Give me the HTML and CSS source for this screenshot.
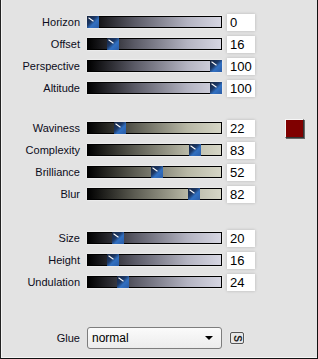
FILE: index.html
```html
<!DOCTYPE html>
<html lang="en">
<head>
    <meta charset="UTF-8">
    <title>Wave Settings</title>
    <link rel="stylesheet" href="styles.css">
</head>
<body>
    <div class="panel">
        <div class="group cool">
            <div class="row"><span class="label">Horizon</span><div class="track"><span class="thumb" style="left: -1px"></span></div><span class="value">0</span></div>
            <div class="row"><span class="label">Offset</span><div class="track"><span class="thumb" style="left: 19px"></span></div><span class="value">16</span></div>
            <div class="row"><span class="label">Perspective</span><div class="track"><span class="thumb" style="left: 122px"></span></div><span class="value">100</span></div>
            <div class="row"><span class="label">Altitude</span><div class="track"><span class="thumb" style="left: 122px"></span></div><span class="value">100</span></div>
        </div>

        <div class="group warm">
            <div class="row"><span class="label">Waviness</span><div class="track"><span class="thumb" style="left: 26px"></span></div><span class="value">22</span><span class="swatch"></span></div>
            <div class="row"><span class="label">Complexity</span><div class="track"><span class="thumb" style="left: 101px"></span></div><span class="value">83</span></div>
            <div class="row"><span class="label">Brilliance</span><div class="track"><span class="thumb" style="left: 63px"></span></div><span class="value">52</span></div>
            <div class="row"><span class="label">Blur</span><div class="track"><span class="thumb" style="left: 100px"></span></div><span class="value">82</span></div>
        </div>

        <div class="group cool">
            <div class="row"><span class="label">Size</span><div class="track"><span class="thumb" style="left: 24px"></span></div><span class="value">20</span></div>
            <div class="row"><span class="label">Height</span><div class="track"><span class="thumb" style="left: 19px"></span></div><span class="value">16</span></div>
            <div class="row"><span class="label">Undulation</span><div class="track"><span class="thumb" style="left: 29px"></span></div><span class="value">24</span></div>
        </div>

        <div class="row glue-row">
            <span class="label">Glue</span>
            <div class="select">
                <span>normal</span>
                <span class="arrow"></span>
            </div>
            <span class="s-btn"><span>S</span></span>
        </div>
    </div>
</body>
</html>
```

FILE: styles.css
```css
* {
    margin: 0;
    padding: 0;
    box-sizing: border-box;
}

body {
    font-family: 'Liberation Sans', Arial, sans-serif;
    background: #e3e3e3;
}

.panel {
    width: 318px;
    height: 359px;
    background: #e3e3e3;
    border-left: 1px solid #222;
    border-right: 1px solid #111;
    border-bottom: 1px solid #111;
    box-shadow: inset 1px 0 0 #f4f4f4, inset 0 -1px 0 #f4f4f4;
    padding-top: 11px;
}

.group {
    display: flex;
    flex-direction: column;
    margin-bottom: 18px;
}

.group + .group {
    margin-bottom: 34px;
}

.group:first-child + .group {
    margin-bottom: 22px;
}

.row {
    display: flex;
    align-items: center;
    height: 22px;
}

.label {
    width: 79px;
    text-align: right;
    font-size: 11px;
    color: #0c0c20;
    margin-right: 7px;
}

.track {
    position: relative;
    width: 135px;
    height: 12px;
    border: 1px solid #000;
    box-shadow: 0 0 2px rgba(255, 255, 255, 0.9);
}

.cool .track {
    background: linear-gradient(to right, #000 0%, #5a5a66 35%, #b4b4c2 75%, #d6d6e2 100%);
}

.warm .track {
    background: linear-gradient(to right, #000 0%, #5c5c52 35%, #b8b8a6 75%, #d6d6c6 100%);
}

.thumb {
    position: absolute;
    top: -1px;
    width: 12px;
    height: 12px;
    background: linear-gradient(135deg, #16243e 0%, #1c3866 40%, #3170c2 60%, #2a5ca6 100%);
}

.thumb::before {
    content: "";
    position: absolute;
    left: 1px;
    top: 3px;
    width: 6px;
    height: 1px;
    background: #fff;
    transform: rotate(35deg);
}

.value {
    width: 28px;
    height: 17px;
    margin-left: 5px;
    padding-left: 3px;
    background: #fff;
    font-size: 13px;
    line-height: 17px;
    color: #000;
    box-shadow: 0 0 3px rgba(0, 0, 0, 0.2);
}

.swatch {
    width: 19px;
    height: 19px;
    margin-left: 30px;
    background: #7f0000;
    border: 1px solid;
    border-color: #f6f6f6 #333 #333 #f6f6f6;
    box-shadow: 1px 1px 0 #666;
}

.select {
    display: flex;
    align-items: center;
    justify-content: space-between;
    width: 135px;
    height: 22px;
    padding: 0 8px 0 4px;
    border: 1px solid #7d7d7d;
    border-radius: 3px;
    background: linear-gradient(to bottom, #fbfbfb, #ececec);
    font-size: 12px;
    color: #000;
}

.arrow {
    width: 0;
    height: 0;
    border-left: 4px solid transparent;
    border-right: 4px solid transparent;
    border-top: 4px solid #000;
}

.s-btn {
    display: flex;
    align-items: center;
    justify-content: center;
    width: 14px;
    height: 12px;
    margin-left: 8px;
    border: 1px solid #555;
    border-radius: 2px;
    background: #e8e8e8;
    box-shadow: 0 0 2px rgba(255, 255, 255, 0.9);
    font-size: 10px;
    font-weight: bold;
    color: #222;
}

.s-btn span {
    display: block;
    transform: rotate(90deg);
}
```
